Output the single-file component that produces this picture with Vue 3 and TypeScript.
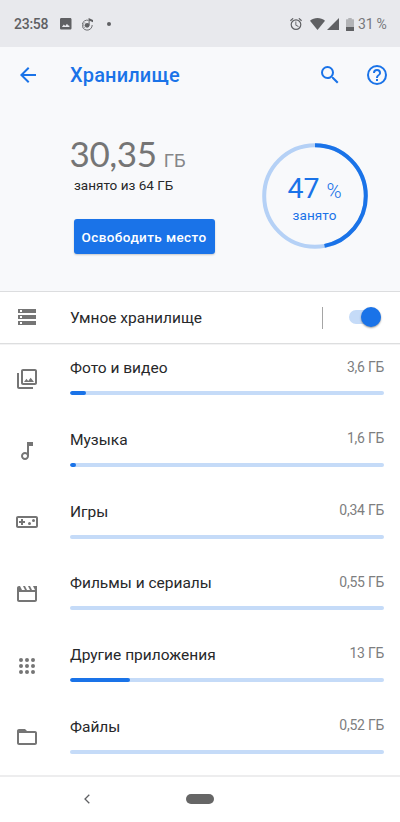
<script setup lang="ts">
interface Category {
  id: string
  name: string
  size: string
  fill: number
  paths: string[]
}

const categories: Category[] = [
  {
    id: 'photos', name: 'Фото и видео', size: '3,6 ГБ', fill: 5,
    paths: ['M20 4v12H8V4h12m0-2H8c-1.1 0-2 .9-2 2v12c0 1.1.9 2 2 2h12c1.1 0 2-.9 2-2V4c0-1.1-.9-2-2-2zm-8.5 9.67l1.69 2.26 2.48-3.1L19 15H9zM2 6v14c0 1.1.9 2 2 2h14v-2H4V6H2z'],
  },
  {
    id: 'music', name: 'Музыка', size: '1,6 ГБ', fill: 2,
    paths: ['M12 3l.01 10.55c-.59-.34-1.27-.55-2-.55C7.79 13 6 14.79 6 17s1.79 4 4.01 4S14 19.21 14 17V7h4V3h-6zm-1.99 16c-1.1 0-2-.9-2-2s.9-2 2-2 2 .9 2 2-.9 2-2 2z'],
  },
  {
    id: 'games', name: 'Игры', size: '0,34 ГБ', fill: 0,
    paths: [
      'M21 6H3c-1.1 0-2 .9-2 2v8c0 1.1.9 2 2 2h18c1.1 0 2-.9 2-2V8c0-1.1-.9-2-2-2zm0 10H3V8h18v8z',
      'M6 15h2v-2h2v-2H8V9H6v2H4v2h2z',
      'M14.5 12a1.5 1.5 0 1 0 0 3 1.5 1.5 0 0 0 0-3zM18.5 9a1.5 1.5 0 1 0 0 3 1.5 1.5 0 0 0 0-3z',
    ],
  },
  {
    id: 'movies', name: 'Фильмы и сериалы', size: '0,55 ГБ', fill: 0,
    paths: ['M18 4l2 4h-3l-2-4h-2l2 4h-3l-2-4H8l2 4H7L5 4H4c-1.1 0-1.99.9-1.99 2L2 18c0 1.1.9 2 2 2h16c1.1 0 2-.9 2-2V4h-4zm2 14H4v-8h16v8z'],
  },
  {
    id: 'apps', name: 'Другие приложения', size: '13 ГБ', fill: 19,
    paths: ['M6 4a2 2 0 1 0 0 4 2 2 0 0 0 0-4zm6 0a2 2 0 1 0 0 4 2 2 0 0 0 0-4zm6 0a2 2 0 1 0 0 4 2 2 0 0 0 0-4zM6 10a2 2 0 1 0 0 4 2 2 0 0 0 0-4zm6 0a2 2 0 1 0 0 4 2 2 0 0 0 0-4zm6 0a2 2 0 1 0 0 4 2 2 0 0 0 0-4zM6 16a2 2 0 1 0 0 4 2 2 0 0 0 0-4zm6 0a2 2 0 1 0 0 4 2 2 0 0 0 0-4zm6 0a2 2 0 1 0 0 4 2 2 0 0 0 0-4z'],
  },
  {
    id: 'files', name: 'Файлы', size: '0,52 ГБ', fill: 0,
    paths: ['M20 6h-8l-2-2H4c-1.1 0-1.99.9-1.99 2L2 18c0 1.1.9 2 2 2h16c1.1 0 2-.9 2-2V8c0-1.1-.9-2-2-2zm0 12H4V8h16v10z'],
  },
]

const usedPercent = 47
</script>

<template>
  <div class="screen">
    <div class="status">
      <span class="clock">23:58</span>
      <svg class="s-image" viewBox="3 3 18 18"><path d="M21 19V5c0-1.1-.9-2-2-2H5c-1.1 0-2 .9-2 2v14c0 1.1.9 2 2 2h14c1.1 0 2-.9 2-2zM6 17l3-4 2.2 2.6L14 12l2 3 1-1 1 3z" /></svg>
      <svg class="s-music" viewBox="0 0 12 13">
        <path d="M6.5 2.3A5 5 0 1 0 10.2 7" fill="none" stroke="#5f6063" stroke-width=".9" />
        <path d="M3 4.2A3.5 3.5 0 0 0 3 10" fill="none" stroke="#85868a" stroke-width=".7" />
        <circle cx="5.1" cy="7.3" r="2.4" />
        <path d="M6.6 7V0L11 2.1v2.2L7.6 2.7V7z" />
      </svg>
      <span class="s-dot"></span>
      <div class="status-right">
        <svg class="s-alarm" viewBox="2 2 20 20"><path d="M22 5.72l-4.6-3.86-1.29 1.53 4.6 3.86L22 5.72zM7.88 3.39L6.6 1.86 2 5.71l1.29 1.53 4.59-3.85zM12.5 8H11v6l4.75 2.85.75-1.23-4-2.37V8zM12 4a9 9 0 1 0 0 18 9 9 0 0 0 0-18zm0 16a7 7 0 1 1 0-14 7 7 0 0 1 0 14z" /></svg>
        <svg class="s-wifi" viewBox="0 0 15 12"><path d="M7.5 12L0 2.7C4.3-.9 10.7-.9 15 2.7z" /></svg>
        <svg class="s-cell" viewBox="0 0 12 12"><path d="M12 0v12H0z" /></svg>
        <svg class="s-battery" viewBox="0 0 8 13"><path d="M2.3 0h3.4v1.3H7.5q.5 0 .5.5V9H0V1.8q0-.5.5-.5h1.8z" fill="#b2b3b6" /><path d="M0 9h8v3.5q0 .5-.5.5h-7q-.5 0-.5-.5z" /></svg>
        <span class="battery-text">31 %</span>
      </div>
    </div>

    <section class="summary">
      <header class="toolbar">
        <svg class="icon blue" viewBox="0 0 24 24"><path d="M20 11H7.83l5.59-5.59L12 4l-8 8 8 8 1.41-1.41L7.83 13H20v-2z" /></svg>
        <h1>Хранилище</h1>
        <svg class="icon blue search" viewBox="0 0 24 24"><path d="M15.5 14h-.79l-.28-.27A6.47 6.47 0 0 0 16 9.5 6.5 6.5 0 1 0 9.5 16c1.61 0 3.09-.59 4.23-1.57l.27.28v.79l5 4.99L20.49 19l-4.99-5zm-6 0a4.5 4.5 0 1 1 0-9 4.5 4.5 0 0 1 0 9z" /></svg>
        <svg class="icon blue help" viewBox="0 0 24 24"><path d="M11 18h2v-2h-2v2zm1-16a10 10 0 1 0 0 20 10 10 0 0 0 0-20zm0 18a8 8 0 1 1 0-16 8 8 0 0 1 0 16zm0-14a4 4 0 0 0-4 4h2c0-1.1.9-2 2-2s2 .9 2 2c0 2-3 1.75-3 5h2c0-2.25 3-2.5 3-5a4 4 0 0 0-4-4z" /></svg>
      </header>
      <div class="overview">
        <div class="usage">
          <div class="amount"><span class="number">30,35</span><span class="unit">ГБ</span></div>
          <div class="total">занято из 64 ГБ</div>
          <button class="free-up" type="button">Освободить место</button>
        </div>
        <div class="gauge">
          <svg class="ring" viewBox="0 0 106 106">
            <circle cx="53" cy="53" r="50.8" stroke="#b5d1f6" />
            <circle cx="53" cy="53" r="50.8" stroke="#1a73e8" pathLength="100" :stroke-dasharray="`${usedPercent} 100`" transform="rotate(-90 53 53)" />
          </svg>
          <div class="gauge-text">
            <div class="percent"><span class="pct-number">{{ usedPercent }}</span><span class="pct-sign">%</span></div>
            <div class="pct-label">занято</div>
          </div>
        </div>
      </div>
    </section>

    <div class="smart">
      <svg class="icon" viewBox="0 0 24 24"><path d="M3 20h18v-4H3v4zm2-3h2v2H5v-2zM3 4v4h18V4H3zm4 3H5V5h2v2zm-4 7h18v-4H3v4zm2-3h2v2H5v-2z" /></svg>
      <span class="smart-label">Умное хранилище</span>
      <span class="divider"></span>
      <span class="switch"><span class="thumb"></span></span>
    </div>

    <main class="list">
      <div v-for="c in categories" :key="c.id" class="row">
        <svg class="icon" viewBox="0 0 24 24"><path v-for="(p, i) in c.paths" :key="i" :d="p" /></svg>
        <div class="body">
          <div class="line"><span class="name">{{ c.name }}</span><span class="size">{{ c.size }}</span></div>
          <div class="track"><div class="fill" :style="{ width: c.fill + '%' }"></div></div>
        </div>
      </div>
    </main>

    <nav class="navbar">
      <svg class="nav-back" viewBox="0 0 6 10"><path d="M5.3.7L1 5l4.3 4.3" /></svg>
      <span class="home"></span>
    </nav>
  </div>
</template>

<style>
body { margin: 0; background: #fff; }
</style>

<style scoped>
.screen { width: 400px; height: 822px; display: flex; flex-direction: column; overflow: hidden; background: #fff; font-family: Roboto, "Noto Sans", sans-serif; color: #27282a; }
svg { display: block; flex: none; fill: #5f6063; }
.icon { width: 24px; height: 24px; fill: #757575; }
.icon.blue { fill: #1a73e8; }

.status { height: 47px; box-sizing: border-box; padding: 1px 14px 0; display: flex; align-items: center; background: #e8e9ed; color: #5f6063; flex: none; }
.clock { width: 47px; font-size: 14px; font-weight: 500; letter-spacing: -.25px; }
.s-image { width: 11.5px; height: 11.5px; margin-left: -1px; }
.s-music { width: 12px; height: 13px; margin-left: 10px; }
.s-dot { width: 4px; height: 4px; border-radius: 50%; background: #5f6063; margin-left: 13.5px; }
.status-right { margin-left: auto; display: flex; align-items: center; }
.s-alarm { width: 12px; height: 12px; }
.s-wifi { width: 15px; height: 12px; margin-left: 8px; }
.s-cell { width: 12px; height: 12px; margin-left: 2px; }
.s-battery { width: 8px; height: 13px; margin-left: 7px; }
.battery-text { width: 28px; margin-left: 4px; font-size: 14px; letter-spacing: -.2px; color: #77787b; white-space: nowrap; }

.summary { height: 244px; flex: none; background: #f8f9fb; border-bottom: 1px solid #dcdddf; }
.toolbar { height: 55px; padding: 0 11.5px 0 15.5px; display: flex; align-items: center; }
h1 { margin: 0 0 0 30.5px; font-family: Roboto, sans-serif; font-size: 20px; font-weight: 500; letter-spacing: .15px; color: #1a73e8; line-height: 24px; white-space: nowrap; }
.search { margin-left: auto; }
.help { margin-left: 23px; }
.overview { display: flex; padding-left: 70px; }
.usage { width: 191.5px; padding-top: 31px; }
.amount { display: flex; align-items: baseline; height: 40px; line-height: 40px; color: #757575; white-space: nowrap; }
.number { font-size: 35px; letter-spacing: -.4px; margin-left: -.5px; font-family: Lato, sans-serif; }
.unit { font-size: 18.5px; margin-left: 7px; color: #858688; }
.total { margin: 3px 0 0 4px; font-size: 13.5px; line-height: 18px; color: #27282a; }
.free-up { width: 141px; height: 35px; margin: 25px 0 0 3.5px; padding: 0; border: 0; border-radius: 3px; background: #1a73e8; color: #fff; font: 500 13.5px Roboto, sans-serif; letter-spacing: .4px; white-space: nowrap; box-shadow: 0 1px 2px rgba(0, 0, 0, .2); }
.gauge { width: 106px; height: 106px; margin-top: 41px; display: grid; place-items: center; }
.ring, .gauge-text { grid-area: 1 / 1; }
.ring { width: 106px; height: 106px; }
.ring circle { fill: none; stroke-width: 4; }
.gauge-text { color: #1a73e8; text-align: center; padding-top: 3px; }
.percent { display: flex; align-items: baseline; justify-content: center; height: 34px; line-height: 34px; }
.pct-number { font-size: 28.5px; }
.pct-sign { font-size: 20.5px; margin-left: 7px; font-weight: 300; }
.pct-label { font-size: 13.5px; line-height: 18px; letter-spacing: .1px; }

.smart { height: 51px; flex: none; display: flex; align-items: center; padding: 0 19px 0 15px; border-bottom: 1px solid #dddedf; box-shadow: 0 1px 0 #f3f3f4; }
.smart .icon { margin-top: -1px; }
.smart-label { margin-left: 31px; font-size: 15.5px; }
.divider { width: 1px; height: 22px; margin: 0 0 0 auto; background: #a5a5a5; }
.switch { width: 32px; height: 14px; margin: -1px 0 0 26px; border-radius: 7px; background: #c5dbf8; display: flex; align-items: center; justify-content: flex-end; }
.thumb { width: 20px; height: 20px; flex: none; border-radius: 50%; background: #1a73e8; box-shadow: 0 1px 2px rgba(0, 0, 0, .4); }

.list { flex: none; height: 431px; }
.row { height: 71.67px; display: flex; padding: 0 16px 0 15px; }
.row .icon { margin-top: 23px; }
.body { flex: 1; margin-left: 31px; padding-top: 14.3px; }
.line { height: 20px; display: flex; justify-content: space-between; line-height: 20px; }
.name { font-size: 15.5px; }
.size { font-size: 14px; letter-spacing: -.25px; color: #7d7e80; margin-top: -1.5px; }
.track { height: 4px; margin-top: 13.2px; border-radius: 2px; background: #c5dbf8; overflow: hidden; }
.fill { height: 4px; border-radius: 2px; background: #1a73e8; }

.navbar { flex: 1; border-top: 2px solid #ededee; display: flex; align-items: center; padding: 0 0 1px 83.5px; }
.nav-back { width: 6px; height: 10px; }
.nav-back path { fill: none; stroke: #5f6063; stroke-width: 1.3; }
.home { width: 28px; height: 10px; border-radius: 5px; background: #666; margin-left: 96.5px; }
</style>
